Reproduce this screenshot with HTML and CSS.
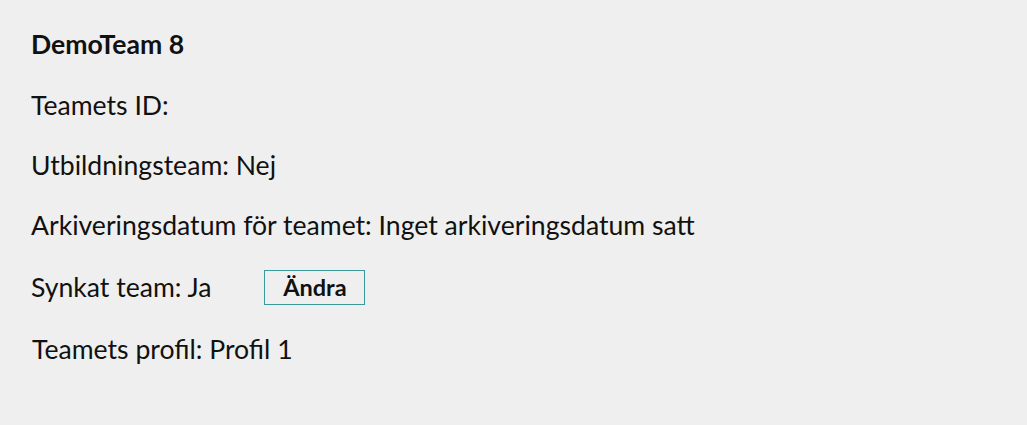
FILE: index.html
```html
<!DOCTYPE html>
<html>
<head>
<meta charset="utf-8">
<link rel="stylesheet" href="styles.css">
</head>
<body>
<div class="panel">
  <h2 class="title">DemoTeam 8</h2>
  <p class="row r1">Teamets ID:</p>
  <p class="row">Utbildningsteam: Nej</p>
  <p class="row">Arkiveringsdatum för teamet: Inget arkiveringsdatum satt</p>
  <div class="row sync">
    <span>Synkat team: Ja</span>
    <button class="btn">Ändra</button>
  </div>
  <p class="row profile">Teamets profil: Profil 1</p>
</div>
</body>
</html>
```

FILE: styles.css
```css
html, body {
  margin: 0;
  background: #efefef;
}
body {
  font-family: Lato, "Noto Sans", sans-serif;
  color: #111;
}
.panel {
  padding: 28px 31px;
  display: flex;
  flex-direction: column;
}
.title {
  margin: 0;
  font-size: 26.6px;
  font-weight: 700;
  line-height: 32px;
}
.row {
  margin: 0;
  font-size: 26.6px;
  line-height: 32px;
  height: 32px;
  margin-top: 28px;
}
.row.r1 {
  margin-top: 29px;
}
.sync {
  display: flex;
  align-items: center;
  gap: 53px;
  margin-top: 30px;
}
.btn {
  font-family: Lato, "Noto Sans", sans-serif;
  font-size: 23.5px;
  font-weight: 700;
  color: #111;
  background: transparent;
  border: 1px solid #3a9999;
  width: 101px;
  height: 35px;
  padding: 0;
  flex: none;
}
.profile {
  padding-left: 1px;
  margin-top: 30px;
}
```
